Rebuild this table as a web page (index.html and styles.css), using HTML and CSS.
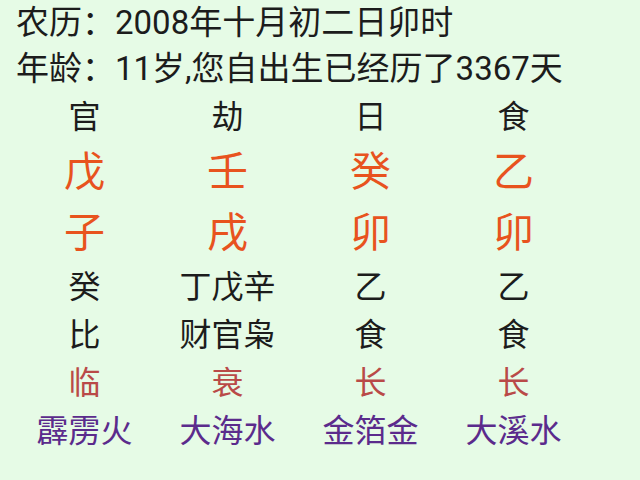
FILE: index.html
```html
<!DOCTYPE html>
<html lang="zh-CN">
<head>
<meta charset="utf-8">
<link rel="stylesheet" href="styles.css">
</head>
<body>
<div class="page">
  <div class="info">
    <div class="line">农历：2008年十月初二日卯时</div>
    <div class="line">年龄：11岁,您自出生已经历了3367天</div>
  </div>
  <div class="chart">
    <div class="cell god">官</div><div class="cell god">劫</div><div class="cell god">日</div><div class="cell god">食</div>
    <div class="cell big stem">戊</div><div class="cell big stem">壬</div><div class="cell big stem">癸</div><div class="cell big stem">乙</div>
    <div class="cell big branch">子</div><div class="cell big branch">戌</div><div class="cell big branch">卯</div><div class="cell big branch">卯</div>
    <div class="cell hid">癸</div><div class="cell hid">丁戊辛</div><div class="cell hid">乙</div><div class="cell hid">乙</div>
    <div class="cell hid">比</div><div class="cell hid">财官枭</div><div class="cell hid">食</div><div class="cell hid">食</div>
    <div class="cell stage">临</div><div class="cell stage">衰</div><div class="cell stage">长</div><div class="cell stage">长</div>
    <div class="cell nayin">霹雳火</div><div class="cell nayin">大海水</div><div class="cell nayin">金箔金</div><div class="cell nayin">大溪水</div>
  </div>
</div>
</body>
</html>
```
FILE: styles.css
```css
html, body {
  margin: 0;
  padding: 0;
  background: #e6fbe6;
}
body {
  width: 640px;
  height: 480px;
  overflow: hidden;
  font-family: Roboto, "Noto Sans CJK SC", sans-serif;
  color: #1c1c1c;
}
.info {
  padding: 0 0 0 16px;
}
.line {
  font-size: 33px;
  line-height: 46px;
  white-space: nowrap;
}
.chart {
  display: grid;
  grid-template-columns: repeat(4, 143px);
  padding-left: 13px;
  margin-top: 1px;
}
.cell {
  text-align: center;
  white-space: nowrap;
  font-size: 32px;
  line-height: 48px;
}
.big {
  font-size: 41px;
  color: #e8531e;
}
.stem {
  line-height: 62px;
}
.branch {
  line-height: 60px;
}
.stage {
  color: #b94a48;
}
.nayin {
  color: #5b2b8c;
}
```
